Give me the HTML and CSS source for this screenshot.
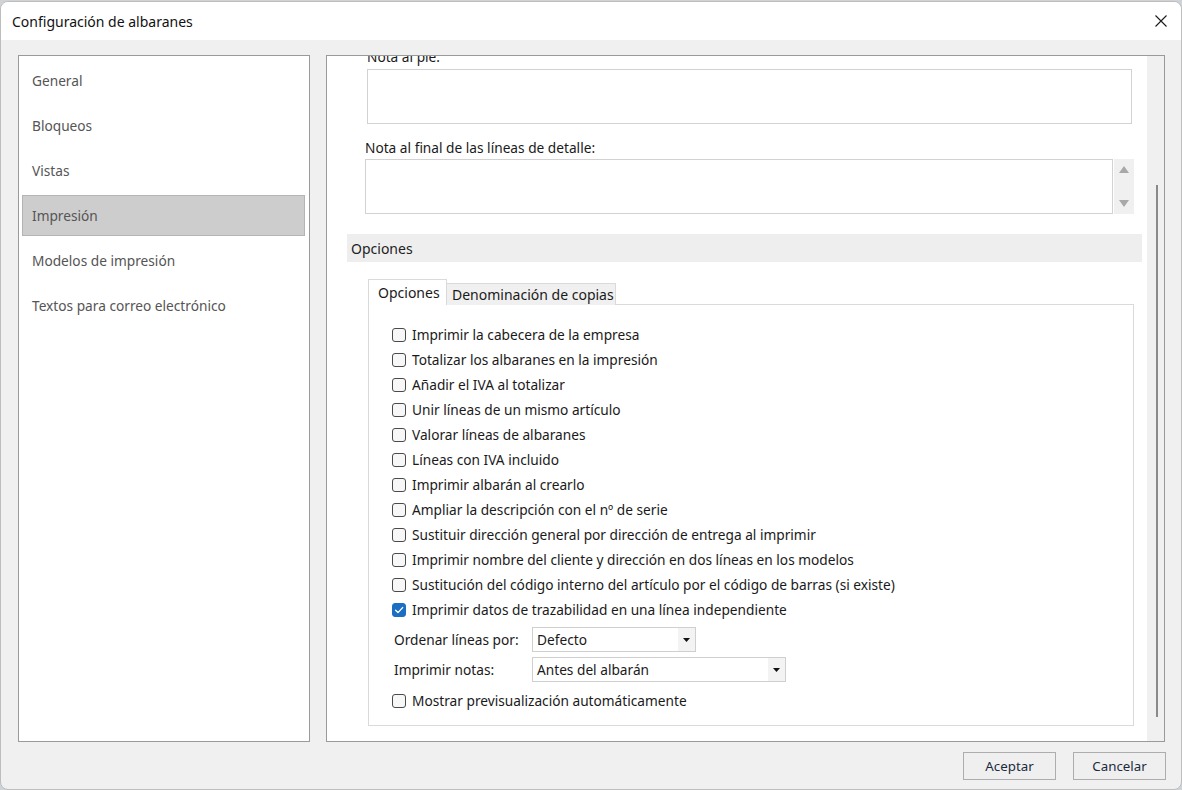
FILE: index.html
```html
<!DOCTYPE html>
<html lang="es">
<head>
<meta charset="utf-8">
<title>Configuración de albaranes</title>
<link rel="stylesheet" href="styles.css">
</head>
<body>
<div class="window">
  <div class="titlebar">
    <span class="title">Configuración de albaranes</span>
    <svg class="close" width="12" height="12" viewBox="0 0 12 12"><path d="M0.5 0.5 L11.5 11.5 M11.5 0.5 L0.5 11.5" stroke="#1a1a1a" stroke-width="1.1" fill="none"/></svg>
  </div>
  <div class="main">
    <nav class="nav">
      <div class="nav-item">General</div>
      <div class="nav-item">Bloqueos</div>
      <div class="nav-item">Vistas</div>
      <div class="nav-item active">Impresión</div>
      <div class="nav-item">Modelos de impresión</div>
      <div class="nav-item">Textos para correo electrónico</div>
    </nav>
    <div class="panel">
      <div class="content">
        <div class="label label1">Nota al pie:</div>
        <div class="textarea ta1"></div>
        <div class="label label2">Nota al final de las líneas de detalle:</div>
        <div class="ta-row">
          <div class="textarea ta2"></div>
          <div class="spin">
            <svg width="10" height="7" viewBox="0 0 10 7"><path d="M5 0 L10 7 L0 7 Z" fill="#a8a8a8"/></svg>
            <svg width="10" height="7" viewBox="0 0 10 7"><path d="M0 0 L10 0 L5 7 Z" fill="#a8a8a8"/></svg>
          </div>
        </div>
        <div class="section-header">Opciones</div>
        <div class="tabs">
          <div class="tab active">Opciones</div>
          <div class="tab inactive">Denominación de copias</div>
        </div>
        <div class="tabpanel">
          <div class="check-row"><span class="box"></span><span>Imprimir la cabecera de la empresa</span></div>
          <div class="check-row"><span class="box"></span><span>Totalizar los albaranes en la impresión</span></div>
          <div class="check-row"><span class="box"></span><span>Añadir el IVA al totalizar</span></div>
          <div class="check-row"><span class="box"></span><span>Unir líneas de un mismo artículo</span></div>
          <div class="check-row"><span class="box"></span><span>Valorar líneas de albaranes</span></div>
          <div class="check-row"><span class="box"></span><span>Líneas con IVA incluido</span></div>
          <div class="check-row"><span class="box"></span><span>Imprimir albarán al crearlo</span></div>
          <div class="check-row"><span class="box"></span><span>Ampliar la descripción con el nº de serie</span></div>
          <div class="check-row"><span class="box"></span><span>Sustituir dirección general por dirección de entrega al imprimir</span></div>
          <div class="check-row"><span class="box"></span><span>Imprimir nombre del cliente y dirección en dos líneas en los modelos</span></div>
          <div class="check-row"><span class="box"></span><span>Sustitución del código interno del artículo por el código de barras (si existe)</span></div>
          <div class="check-row"><span class="box checked"><svg width="12" height="12" viewBox="0 0 12 12"><path d="M2.6 6.3 L5 8.6 L9.6 3.6" stroke="#fff" stroke-width="1.4" fill="none" stroke-linecap="round" stroke-linejoin="round"/></svg></span><span>Imprimir datos de trazabilidad en una línea independiente</span></div>
          <div class="select-row">
            <span class="select-label">Ordenar líneas por:</span>
            <div class="select sel1"><span class="val">Defecto</span><span class="arrow"><svg width="7" height="4" viewBox="0 0 7 4"><path d="M0 0 L7 0 L3.5 4 Z" fill="#111"/></svg></span></div>
          </div>
          <div class="select-row">
            <span class="select-label">Imprimir notas:</span>
            <div class="select sel2"><span class="val">Antes del albarán</span><span class="arrow"><svg width="7" height="4" viewBox="0 0 7 4"><path d="M0 0 L7 0 L3.5 4 Z" fill="#111"/></svg></span></div>
          </div>
          <div class="check-row last"><span class="box"></span><span>Mostrar previsualización automáticamente</span></div>
        </div>
      </div>
      <div class="scrollbar"><div class="thumb"></div></div>
    </div>
  </div>
  <div class="footer">
    <button class="btn">Aceptar</button>
    <button class="btn">Cancelar</button>
  </div>
</div>
</body>
</html>
```

FILE: styles.css
```css
* { box-sizing: border-box; }
html, body { margin: 0; padding: 0; }
body {
  width: 1182px;
  height: 790px;
  overflow: hidden;
  background: #cfd3d6;
  font-family: "Noto Sans", "Open Sans", sans-serif;
  font-size: 13.7px;
  color: #1a1a1a;
}
.window {
  margin-top: 1px;
  height: 789px;
  border: 1px solid #bdbdbd;
  border-radius: 8px;
  background: #f0f0f0;
  display: flex;
  flex-direction: column;
  overflow: hidden;
}
.titlebar {
  flex: none;
  height: 38px;
  background: #fff;
  display: flex;
  align-items: center;
  justify-content: space-between;
  padding: 0 14px 0 11px;
}
.title { font-size: 14px; color: #111; }
.main {
  flex: none;
  height: 702px;
  display: flex;
  gap: 16px;
  padding: 15px 16px 0 17px;
}
.nav {
  width: 292px;
  height: 687px;
  border: 1px solid #9a9a9a;
  background: #fff;
  padding: 4px 4px 0 3px;
  display: flex;
  flex-direction: column;
  gap: 4px;
}
.nav-item {
  height: 41px;
  display: flex;
  align-items: center;
  padding-left: 9px;
  color: #555;
  border: 1px solid transparent;
}
.nav-item.active { background: #cdcdcd; border-color: #b4b4b4; }
.panel {
  width: 839px;
  height: 687px;
  border: 1px solid #9a9a9a;
  background: #fff;
  display: flex;
}
.content {
  flex: 1;
  overflow: hidden;
  display: flex;
  flex-direction: column;
  align-items: flex-start;
}
.scrollbar {
  width: 17px;
  background: #f0f0f0;
  padding: 129px 0 0 9px;
}
.thumb { width: 2px; height: 532px; background: #8a8a8a; }
.label { line-height: 16px; color: #1a1a1a; }
.label1 { margin: -7px 0 0 40px; }
.textarea { border: 1px solid #d2d2d2; background: #fff; height: 55px; }
.ta1 { margin: 4px 0 0 40px; width: 765px; }
.label2 { margin: 16px 0 0 38px; }
.ta-row { margin: 3px 0 0 38px; display: flex; gap: 1px; }
.ta2 { width: 748px; }
.spin {
  width: 20px;
  height: 55px;
  background: #f0f0f0;
  display: flex;
  flex-direction: column;
  justify-content: space-between;
  align-items: center;
  padding: 7px 0;
}
.spin svg { display: block; }
.section-header {
  margin: 20px 0 0 20px;
  width: 795px;
  height: 28px;
  background: #eeeeee;
  padding-left: 4px;
  display: flex;
  align-items: center;
  font-size: 14px;
  color: #222;
}
.tabs {
  margin: 17px 0 0 41px;
  height: 26px;
  display: flex;
  align-items: flex-end;
  position: relative;
  z-index: 1;
}
.tab {
  font-size: 14px;
  border: 1px solid #dadada;
  border-bottom: none;
  display: flex;
  align-items: center;
  color: #1a1a1a;
}
.tab.active { width: 79px; height: 26px; background: #fff; padding-left: 9px; }
.tab.inactive { width: 169px; height: 22px; background: #f0f0f0; border-left: none; padding-left: 5px; }
.tabpanel {
  margin: -1px 0 0 41px;
  width: 766px;
  height: 422px;
  border: 1px solid #dadada;
  background: #fff;
  padding: 17px 0 0 23px;
}
.check-row {
  height: 25px;
  display: flex;
  align-items: center;
  gap: 6px;
}
.check-row.last { margin-top: 6px; }
.box {
  flex: none;
  width: 14px;
  height: 14px;
  border: 1px solid #4a4a4a;
  border-radius: 3px;
  background: #f7f7f7;
  display: flex;
  align-items: center;
  justify-content: center;
}
.box.checked { background: #1b6ec2; border-color: #1b6ec2; }
.box svg { display: block; }
.select-row {
  height: 25px;
  margin-top: 5px;
  display: flex;
  align-items: center;
}
.select-label { width: 140px; padding-left: 2px; }
.select {
  height: 25px;
  border: 1px solid #cfcfcf;
  background: #fff;
  display: flex;
  align-items: stretch;
}
.sel1 { width: 164px; }
.sel2 { width: 254px; }
.select .val { flex: 1; display: flex; align-items: center; padding-left: 4px; }
.select .arrow {
  width: 17px;
  background: #f3f3f3;
  display: flex;
  align-items: center;
  justify-content: center;
}
.footer {
  flex: 1;
  display: flex;
  justify-content: flex-end;
  gap: 17px;
  padding: 10px 15px 0 0;
}
.btn {
  width: 93px;
  height: 28px;
  border: 1px solid #adadad;
  background: #efefef;
  font-family: "Noto Sans", "Open Sans", sans-serif;
  font-size: 13.3px;
  color: #1c2b3d;
  padding: 0;
  margin: 0;
}
```
